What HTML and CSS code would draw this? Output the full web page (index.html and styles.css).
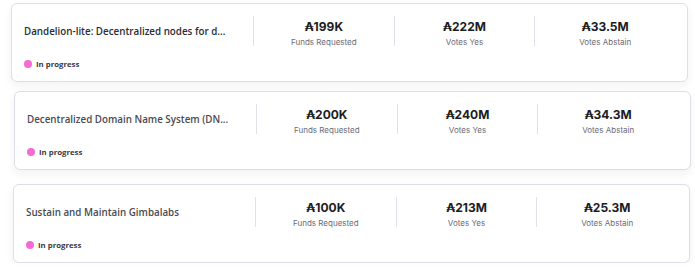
FILE: index.html
```html
<!DOCTYPE html>
<html>
<head>
<meta charset="utf-8">
<link rel="stylesheet" href="styles.css">
</head>
<body>
<div class="list">
  <div class="card card-a">
    <div class="top">
      <div class="title strong">Dandelion-lite: Decentralized nodes for d...</div>
      <div class="stats">
        <div class="stat"><div class="value">₳199K</div><div class="label">Funds Requested</div></div>
        <div class="stat"><div class="value">₳222M</div><div class="label">Votes Yes</div></div>
        <div class="stat"><div class="value">₳33.5M</div><div class="label">Votes Abstain</div></div>
      </div>
    </div>
    <div class="status"><span class="dot"></span>In progress</div>
  </div>
  <div class="card card-b">
    <div class="top">
      <div class="title">Decentralized Domain Name System (DN...</div>
      <div class="stats">
        <div class="stat"><div class="value">₳200K</div><div class="label">Funds Requested</div></div>
        <div class="stat"><div class="value">₳240M</div><div class="label">Votes Yes</div></div>
        <div class="stat"><div class="value">₳34.3M</div><div class="label">Votes Abstain</div></div>
      </div>
    </div>
    <div class="status"><span class="dot"></span>In progress</div>
  </div>
  <div class="card card-c">
    <div class="top">
      <div class="title">Sustain and Maintain Gimbalabs</div>
      <div class="stats">
        <div class="stat"><div class="value">₳100K</div><div class="label">Funds Requested</div></div>
        <div class="stat"><div class="value">₳213M</div><div class="label">Votes Yes</div></div>
        <div class="stat"><div class="value">₳25.3M</div><div class="label">Votes Abstain</div></div>
      </div>
    </div>
    <div class="status"><span class="dot"></span>In progress</div>
  </div>
</div>
</body>
</html>
```
FILE: styles.css
```css
html, body {
  margin: 0;
  padding: 0;
  background: #ffffff;
}
.list {
  display: flex;
  flex-direction: column;
  padding-top: 3px;
}
.card {
  box-sizing: border-box;
  width: 677px;
  height: 79px;
  border: 1px solid #dcdee8;
  border-radius: 6px;
  background: #fff;
  box-shadow: 0 4px 10px rgba(30, 30, 60, 0.06);
  padding: 12px 12px 0 12px;
  display: flex;
  flex-direction: column;
}
.card-a { margin-left: 11px; }
.card-b { margin-left: 14px; margin-top: 9px; }
.card-c { margin-left: 13px; margin-top: 14px; }
.top {
  display: flex;
  align-items: center;
  height: 30px;
}
.title {
  width: 229px;
  flex: none;
  font-family: "Open Sans", "Noto Sans", sans-serif;
  font-size: 9.8px;
  font-weight: 600;
  color: #4a4a55;
  white-space: nowrap;
  overflow: hidden;
}
.title.strong { color: #2b2b33; }
.stats {
  display: flex;
  flex: 1;
  height: 30px;
}
.stat {
  flex: 1;
  border-left: 1px solid #dfe1ea;
  display: flex;
  flex-direction: column;
  align-items: center;
  padding-top: 3px;
}
.value {
  font-family: "Inter", "DejaVu Sans", sans-serif;
  font-size: 12px;
  font-weight: 700;
  color: #1c1c22;
  line-height: 15px;
}
.label {
  font-family: "Inter", "Noto Sans", sans-serif;
  font-size: 8px;
  color: #6b6b75;
  line-height: 12px;
  margin-top: 2px;
}
.status {
  display: flex;
  align-items: center;
  margin-top: 13px;
  font-family: "Open Sans", "Noto Sans", sans-serif;
  font-size: 7.8px;
  font-weight: 700;
  color: #3a3a44;
}
.dot {
  width: 8px;
  height: 8px;
  border-radius: 50%;
  background: #f66ad4;
  margin-right: 4px;
}
```
